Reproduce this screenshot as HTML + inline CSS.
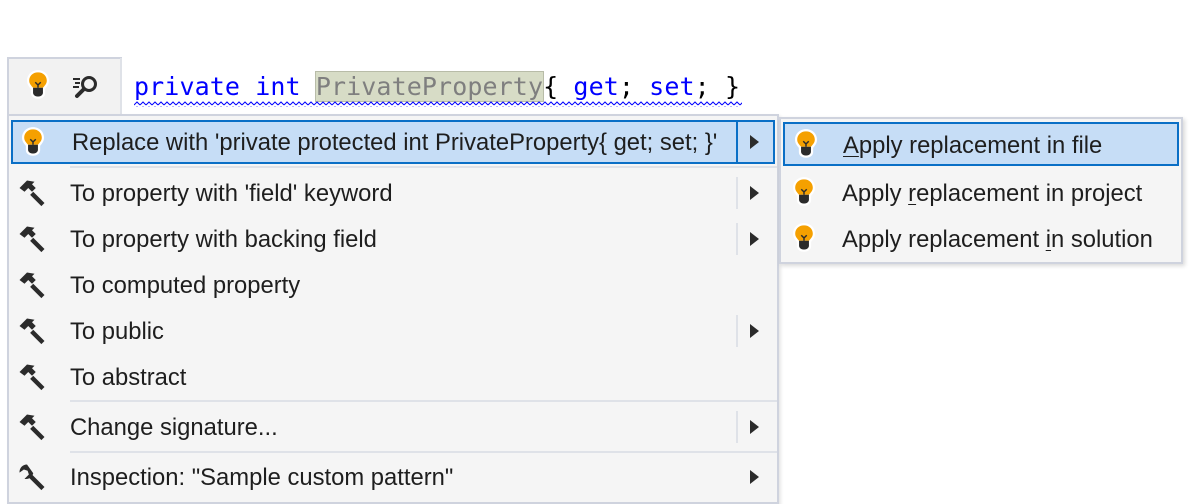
<!DOCTYPE html>
<html><head><meta charset="utf-8"><style>
*{box-sizing:border-box;margin:0;padding:0}
body{width:1200px;height:500px;background:#fff;position:relative;overflow:hidden;font-family:"Segoe UI","Liberation Sans",sans-serif;font-size:23.8px;color:#1e1e1e}
.abs{position:absolute}
.tb{left:7px;top:57px;width:115px;height:62px;background:#f2f2f2;border:2px solid #cfd3de;border-bottom:none}
.menu{left:7px;top:114px;width:772px;height:390px;background:#f5f5f5;border:2px solid #cfd3de;box-shadow:2px 2px 3px rgba(0,0,0,.1)}
.sub{left:779px;top:117px;width:404px;height:147px;background:#f5f5f5;border:2px solid #cfd3de;box-shadow:2px 2px 4px rgba(0,0,0,.15)}
.row{position:absolute;left:0;width:100%;height:44px;line-height:44px}
.row .t{position:absolute;left:61px;white-space:nowrap;top:1px}
.row svg.i{position:absolute;left:8px;top:7px}
.hl{background:#c6ddf6;border:2px solid #0a6fc6}
.sep{position:absolute;left:61px;right:0;height:2px;background:#dfe2e8}
.arr{position:absolute;left:741px;width:0;height:0;border-top:7px solid transparent;border-bottom:7px solid transparent;border-left:9px solid #2b2b2b}
.vs{position:absolute;left:727px;width:2px;height:32px;background:#dfe2e8}
.code{left:134px;top:72px;font-family:"DejaVu Sans Mono","Liberation Mono",monospace;font-size:25px;color:#0000ff;white-space:pre;letter-spacing:0.1px}
u{text-decoration:underline;text-underline-offset:3px;text-decoration-thickness:1px}
</style></head><body>
<svg width="0" height="0" style="position:absolute"><defs>
<g id="bulb"><path d="M13 1C7 1 3 5.5 3 10.5c0 3.5 2 5.5 3.5 7.5V22c0 3 3 5 6.5 5s6.5-2 6.5-5v-4c1.5-2 3.5-4 3.5-7.5C23 5.5 19 1 13 1z" fill="#fff"/><path d="M13 3C8 3 5 6.5 5 10.5c0 3 2 4.5 3.5 6.5h9C19 15 21 13.5 21 10.5 21 6.5 18 3 13 3z" fill="#f5a000"/><path d="M8.5 17h9v4.5c0 2-2 3.5-4.5 3.5s-4.5-1.5-4.5-3.5z" fill="#2b2b2b"/><path d="M10.5 12l2.5 2.5 2.5-2.5M13 14.5V17" stroke="#2b2b2b" stroke-width="1.3" fill="none"/></g>
<g id="ham"><path d="M2 8l6-6 6 1-2 2 3 3-3 3-3-3-3 3z" fill="#2b2b2b"/><path d="M13 11l9 9-2.5 2.5-9-9z" fill="#2b2b2b"/></g>
<g id="wr"><path d="M8 2a6 6 0 0 0-6 6.5L5.5 6 8.5 7l1 3L6 13.5A6 6 0 0 0 13 9z" fill="#2b2b2b"/><path d="M11 9l11 11-2.5 2.5L8.5 11.5z" fill="#2b2b2b"/></g>
<pattern id="sq" width="6" height="5" patternUnits="userSpaceOnUse"><path d="M0 4L3 1 6 4" fill="none" stroke="#0000ff" stroke-width="1"/></pattern>
</defs></svg>

<div class="abs tb">
<svg class="abs" style="left:18px;top:10px" width="22" height="32" viewBox="3 1 20 27"><use href="#bulb"/></svg>
<svg class="abs" style="left:60px;top:15px" width="34" height="28" viewBox="0 0 34 28"><circle cx="20" cy="10" r="6.5" fill="none" stroke="#2b2b2b" stroke-width="3"/><path d="M15 15l-7 7" stroke="#2b2b2b" stroke-width="4" stroke-linecap="round"/><path d="M4 5h7M6 9h5M4 13h6" stroke="#2b2b2b" stroke-width="2"/></svg>
</div>
<div class="abs" style="left:120px;top:58px;width:2px;height:56px;background:#dfe2e8"></div>

<div class="abs code">private int <span style="background:#d7dcc6;color:#7f7f7f;outline:1px solid #b8bca8">PrivateProperty</span><span style="color:#000">{</span> get<span style="color:#000">;</span> set<span style="color:#000">;</span> <span style="color:#000">}</span></div>
<svg class="abs" style="left:134px;top:101px" width="608" height="6"><rect width="608" height="6" fill="url(#sq)"/></svg>

<div class="abs menu">
 <div class="row hl" style="top:4px;left:2px;width:764px">
  <svg class="i" style="left:9px;top:4px" width="22" height="32" viewBox="3 1 20 27"><use href="#bulb"/></svg>
  <span class="t" style="left:59px;top:-1px">Replace with 'private protected int PrivateProperty{ get; set; }'</span>
  <div class="abs" style="left:723px;top:0;width:2px;height:40px;background:#0a6fc6"></div>
  <div class="arr" style="left:737px;top:13px"></div>
 </div>
 <div class="sep" style="top:50px"></div>
 <div class="row" style="top:55px"><svg class="i" width="30" height="30" viewBox="0 0 24 24"><use href="#ham"/></svg><span class="t">To property with 'field' keyword</span><div class="vs" style="top:6px"></div><div class="arr" style="top:15px"></div></div>
 <div class="row" style="top:101px"><svg class="i" width="30" height="30" viewBox="0 0 24 24"><use href="#ham"/></svg><span class="t">To property with backing field</span><div class="vs" style="top:6px"></div><div class="arr" style="top:15px"></div></div>
 <div class="row" style="top:147px"><svg class="i" width="30" height="30" viewBox="0 0 24 24"><use href="#ham"/></svg><span class="t">To computed property</span></div>
 <div class="row" style="top:193px"><svg class="i" width="30" height="30" viewBox="0 0 24 24"><use href="#ham"/></svg><span class="t">To public</span><div class="vs" style="top:6px"></div><div class="arr" style="top:15px"></div></div>
 <div class="row" style="top:239px"><svg class="i" width="30" height="30" viewBox="0 0 24 24"><use href="#ham"/></svg><span class="t">To abstract</span></div>
 <div class="sep" style="top:284px"></div>
 <div class="row" style="top:289px"><svg class="i" width="30" height="30" viewBox="0 0 24 24"><use href="#ham"/></svg><span class="t">Change signature...</span><div class="vs" style="top:6px"></div><div class="arr" style="top:15px"></div></div>
 <div class="sep" style="top:335px"></div>
 <div class="row" style="top:339px"><svg class="i" width="30" height="30" viewBox="0 0 24 24"><use href="#wr"/></svg><span class="t">Inspection: "Sample custom pattern"</span><div class="arr" style="top:15px"></div></div>
</div>

<div class="abs sub">
 <div class="row hl" style="top:3px;left:2px;width:396px"><svg class="i" style="left:10px;top:4px" width="22" height="32" viewBox="3 1 20 27"><use href="#bulb"/></svg><span class="t" style="left:58px;top:0px"><u>A</u>pply replacement in file</span></div>
 <div class="row" style="top:52px"><svg class="i" style="left:12px;top:5px" width="22" height="32" viewBox="3 1 20 27"><use href="#bulb"/></svg><span class="t">Apply <u>r</u>eplacement in project</span></div>
 <div class="row" style="top:98px"><svg class="i" style="left:12px;top:5px" width="22" height="32" viewBox="3 1 20 27"><use href="#bulb"/></svg><span class="t">Apply replacement <u>i</u>n solution</span></div>
</div>
</body></html>
